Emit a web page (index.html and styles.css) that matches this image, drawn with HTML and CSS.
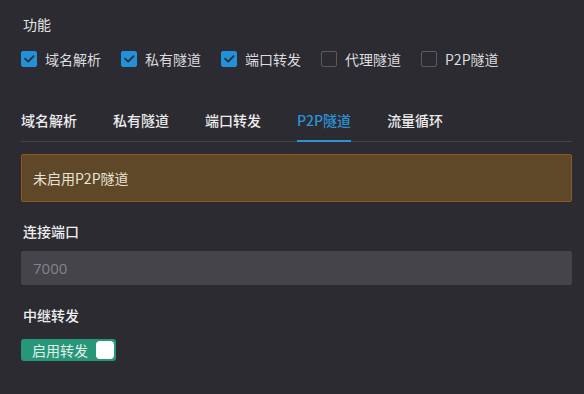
FILE: index.html
```html
<!DOCTYPE html>
<html lang="zh">
<head>
<meta charset="utf-8">
<link rel="stylesheet" href="styles.css">
</head>
<body>
<div class="page">
  <div class="section-title">功能</div>
  <div class="checks">
    <label class="check"><span class="box on"><svg viewBox="0 0 16 16" width="16" height="16"><path d="M4 7.6 L7.2 10.6 L12.6 5.2" fill="none" stroke="#2c2b31" stroke-width="1.8" stroke-linecap="round" stroke-linejoin="round"/></svg></span><span class="check-text">域名解析</span></label>
    <label class="check"><span class="box on"><svg viewBox="0 0 16 16" width="16" height="16"><path d="M4 7.6 L7.2 10.6 L12.6 5.2" fill="none" stroke="#2c2b31" stroke-width="1.8" stroke-linecap="round" stroke-linejoin="round"/></svg></span><span class="check-text">私有隧道</span></label>
    <label class="check"><span class="box on"><svg viewBox="0 0 16 16" width="16" height="16"><path d="M4 7.6 L7.2 10.6 L12.6 5.2" fill="none" stroke="#2c2b31" stroke-width="1.8" stroke-linecap="round" stroke-linejoin="round"/></svg></span><span class="check-text">端口转发</span></label>
    <label class="check"><span class="box"></span><span class="check-text">代理隧道</span></label>
    <label class="check"><span class="box"></span><span class="check-text">P2P隧道</span></label>
  </div>
  <div class="tabs">
    <div class="tab">域名解析</div>
    <div class="tab">私有隧道</div>
    <div class="tab">端口转发</div>
    <div class="tab active">P2P隧道</div>
    <div class="tab">流量循环</div>
  </div>
  <div class="alert">未启用P2P隧道</div>
  <div class="field-label label-port">连接端口</div>
  <div class="input">7000</div>
  <div class="field-label label-relay">中继转发</div>
  <div class="toggle"><span class="toggle-text">启用转发</span><span class="knob"></span></div>
</div>
</body>
</html>
```
FILE: styles.css
```css
html, body {
  margin: 0;
  padding: 0;
  background: #2c2b31;
}
body {
  font-family: "Noto Sans CJK SC", "Noto Sans", sans-serif;
  font-size: 14px;
  color: #e4e4e6;
}
.page {
  padding: 14px 12px 0 21px;
  display: flex;
  flex-direction: column;
}
.section-title {
  line-height: 20px;
  padding-left: 2px;
}
.checks {
  display: flex;
  margin-top: 17px;
  height: 16px;
}
.check {
  display: flex;
  align-items: center;
  gap: 8px;
  margin-right: 20px;
  line-height: 16px;
}
.box {
  width: 16px;
  height: 16px;
  box-sizing: border-box;
  border: 1px solid #5b5a61;
  border-radius: 2px;
  display: block;
}
.box.on {
  background: #2391d9;
  border-color: #2391d9;
}
.box svg {
  display: block;
  margin: -1px;
}
.check-text {
  color: #dcdcde;
}
.tabs {
  display: flex;
  gap: 36px;
  margin-top: 33px;
  border-bottom: 1px solid #45444b;
}
.tab {
  padding: 10px 0 10px;
  line-height: 20px;
  font-weight: 500;
  color: #ececee;
  border-bottom: 2px solid transparent;
  margin-bottom: -1px;
}
.tab.active {
  color: #2b93d6;
  border-bottom-color: #2b93d6;
}
.alert {
  margin-top: 12px;
  background: #5e4827;
  border: 1px solid #8b5a1c;
  border-radius: 2px;
  padding: 13px 11px;
  line-height: 20px;
  color: #e8e2d8;
}
.field-label {
  line-height: 20px;
  font-weight: 500;
  padding-left: 2px;
  color: #eeeef0;
}
.label-port {
  margin-top: 19px;
}
.input {
  margin-top: 10px;
  height: 34px;
  line-height: 34px;
  background: #45444a;
  border-radius: 2px;
  padding: 0 12px;
  color: #838289;
  font-family: "Open Sans", "Noto Sans", sans-serif;
  font-size: 15px;
}
.label-relay {
  margin-top: 20px;
}
.toggle {
  margin-top: 14px;
  width: 95px;
  height: 22px;
  box-sizing: border-box;
  background: #27977a;
  border-radius: 3px;
  display: flex;
  align-items: center;
  justify-content: space-between;
  padding: 0 2px 0 11px;
}
.toggle-text {
  line-height: 20px;
  color: #e4efe9;
}
.knob {
  width: 18px;
  height: 18px;
  background: #ffffff;
  border-radius: 4px;
}
```
